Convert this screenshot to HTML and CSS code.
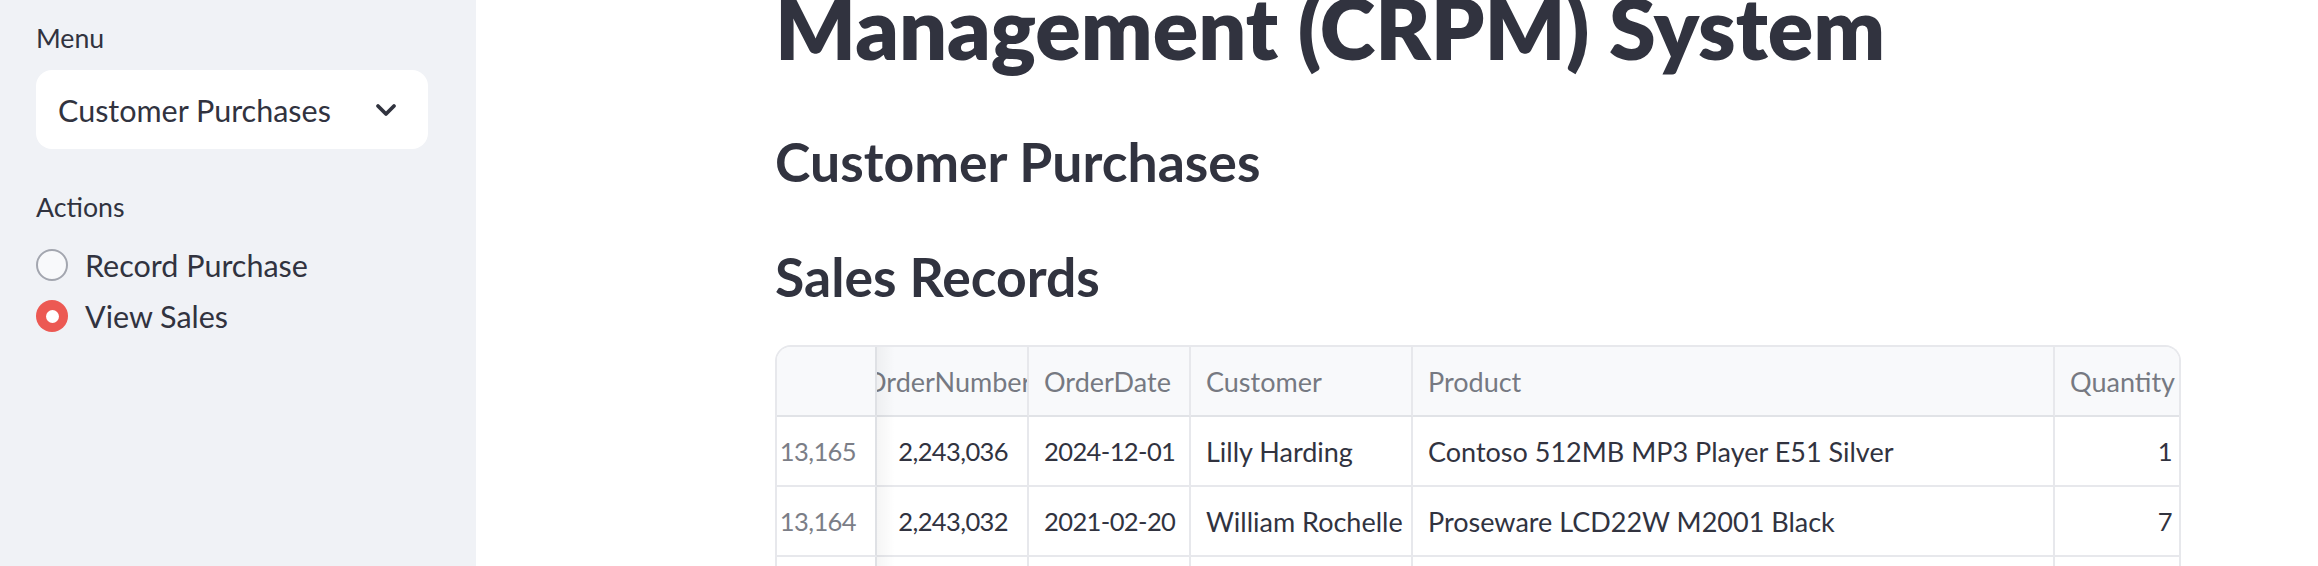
FILE: index.html
```html
<!DOCTYPE html>
<html lang="en">
<head>
<meta charset="utf-8">
<title>CRPM System</title>
<link rel="stylesheet" href="styles.css">
</head>
<body>
<div class="app">
  <aside class="sidebar">
    <div class="label">Menu</div>
    <div class="select">
      <span class="select-value">Customer Purchases</span>
      <svg class="chevron" width="22" height="14" viewBox="0 0 22 14" aria-hidden="true">
        <path d="M3 3 L11 11 L19 3" fill="none" stroke="#31333f" stroke-width="3.8" stroke-linecap="round" stroke-linejoin="round"/>
      </svg>
    </div>
    <div class="label label-actions">Actions</div>
    <div class="radio-group">
      <div class="radio-row"><span class="radio"></span><span class="radio-text">Record Purchase</span></div>
      <div class="radio-row"><span class="radio radio-on"></span><span class="radio-text">View Sales</span></div>
    </div>
  </aside>
  <main class="main">
    <div class="content">
      <h1 class="title">Management (CRPM) System</h1>
      <h2 class="subheader">Customer Purchases</h2>
      <h3 class="subheader subheader-2">Sales Records</h3>
      <div class="table">
        <div class="grid">
          <div class="cell head idx"></div>
          <div class="cell head clip"><span class="shift">OrderNumber</span></div>
          <div class="cell head">OrderDate</div>
          <div class="cell head">Customer</div>
          <div class="cell head">Product</div>
          <div class="cell head last">Quantity</div>

          <div class="cell idx num"><span class="n">13,165</span></div>
          <div class="cell num"><span class="n">2,243,036</span></div>
          <div class="cell"><span class="n">2024-12-01</span></div>
          <div class="cell">Lilly Harding</div>
          <div class="cell">Contoso 512MB MP3 Player E51 Silver</div>
          <div class="cell num last"><span class="n">1</span></div>

          <div class="cell idx num"><span class="n">13,164</span></div>
          <div class="cell num"><span class="n">2,243,032</span></div>
          <div class="cell"><span class="n">2021-02-20</span></div>
          <div class="cell">William Rochelle</div>
          <div class="cell">Proseware LCD22W M2001 Black</div>
          <div class="cell num last"><span class="n">7</span></div>

          <div class="cell idx num"></div>
          <div class="cell num"></div>
          <div class="cell"></div>
          <div class="cell"></div>
          <div class="cell"></div>
          <div class="cell num last"></div>
        </div>
        <div class="sticky-shadow"></div>
      </div>
    </div>
  </main>
</div>
</body>
</html>
```
FILE: styles.css
```css
html, body {
  margin: 0;
  padding: 0;
  height: 100%;
  overflow: hidden;
}
body {
  font-family: Lato, "Noto Sans", sans-serif;
  color: #31333f;
  background: #ffffff;
}
.app {
  display: flex;
  height: 566px;
  overflow: hidden;
}

/* Sidebar */
.sidebar {
  width: 476px;
  flex: 0 0 476px;
  box-sizing: border-box;
  background: #f0f2f6;
  padding: 20px 48px 0 36px;
}
.label {
  font-size: 26.7px;
  line-height: 36px;
  color: #31333f;
}
.label-actions {
  margin-top: 40px;
}
.select {
  margin-top: 14px;
  width: 392px;
  height: 79px;
  box-sizing: border-box;
  background: #ffffff;
  border-radius: 16px;
  display: flex;
  align-items: center;
  justify-content: space-between;
  padding: 0 31px 0 22px;
}
.select-value {
  font-size: 30.5px;
  line-height: 40px;
}
.chevron {
  display: block;
  margin-top: 1px;
}
.radio-group {
  margin-top: 18px;
  display: flex;
  flex-direction: column;
  gap: 7px;
}
.radio-row {
  height: 44px;
  display: flex;
  align-items: center;
}
.radio {
  width: 32px;
  height: 32px;
  box-sizing: border-box;
  border-radius: 50%;
  border: 2px solid #a3a6af;
  background: #f8f9fb;
  flex: 0 0 32px;
  position: relative;
}
.radio-on {
  border: none;
  background: #ec5953;
}
.radio-on::after {
  content: "";
  position: absolute;
  left: 9.5px;
  top: 9.5px;
  width: 13px;
  height: 13px;
  border-radius: 50%;
  background: #ffffff;
}
.radio-text {
  font-size: 30.5px;
  line-height: 40px;
  margin-left: 17px;
}

/* Main */
.main {
  flex: 1;
  background: #ffffff;
  overflow: hidden;
}
.content {
  padding-left: 299px;
  width: 1406px;
}
.title {
  margin: 0;
  font-size: 84.5px;
  font-weight: 800;
  line-height: 56px;
  white-space: nowrap;
  color: #31333f;
}
.subheader {
  margin: 73px 0 0 0;
  font-size: 53.5px;
  font-weight: 700;
  line-height: 64px;
  white-space: nowrap;
  color: #31333f;
}
.subheader-2 {
  margin-top: 51px;
}

/* Table */
.table {
  margin-top: 37px;
  width: 1406px;
  box-sizing: border-box;
  border: 2px solid #e7e8ec;
  border-bottom: none;
  border-radius: 16px 16px 0 0;
  overflow: hidden;
  position: relative;
}
.grid {
  display: grid;
  grid-template-columns: 100px 152px 162px 222px 642px 124px;
  grid-auto-rows: 70px;
}
.cell {
  box-sizing: border-box;
  border-right: 2px solid #e7e8ec;
  border-bottom: 2px solid #e7e8ec;
  display: flex;
  align-items: center;
  padding: 0 16px 0 15px;
  font-size: 27px;
  white-space: nowrap;
  overflow: hidden;
  color: #31333f;
}
.cell.last {
  border-right: none;
  padding-right: 7px;
}
.n {
  font-size: 25.5px;
  letter-spacing: -0.6px;
}
.head {
  background: #f8f9fb;
  color: #767982;
  border-bottom-color: #e1e3e7;
}
.num {
  justify-content: flex-end;
  padding-right: 19px;
}
.idx {
  color: #7b7e87;
  border-right-color: #dfe1e5;
}
.clip {
  padding-left: 0;
  padding-right: 0;
}
.shift {
  margin-left: -12px;
}
.sticky-shadow {
  position: absolute;
  left: 100px;
  top: 0;
  bottom: 0;
  width: 18px;
  background: linear-gradient(to right, rgba(0, 0, 0, 0.04), rgba(0, 0, 0, 0));
  pointer-events: none;
}
```
